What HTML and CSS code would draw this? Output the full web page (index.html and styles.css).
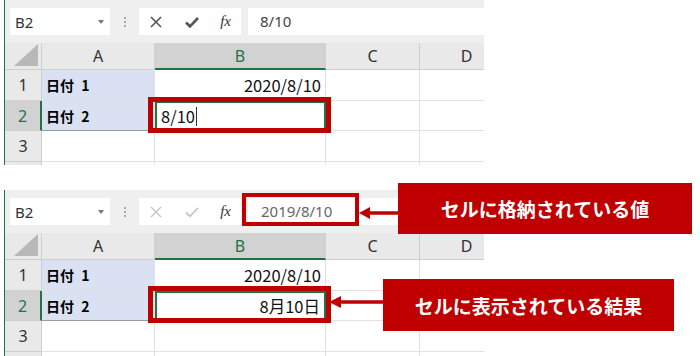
FILE: index.html
```html
<!DOCTYPE html>
<html lang="ja">
<head>
    <meta charset="UTF-8">
    <meta name="viewport" content="width=device-width, initial-scale=1.0">
    <title>セルの値と表示</title>
    <link rel="stylesheet" href="styles.css">
</head>
<body>
    <div class="figure">
        <!-- 入力中のシート -->
        <section class="sheet">
            <div class="toolbar">
                <div class="namebox"><span>B2</span><svg class="caret" width="6" height="4" viewBox="0 0 6 4"><path d="M0 0h6L3 4z" fill="#777"/></svg></div>
                <div class="grip"><i></i><i></i><i></i></div>
                <div class="fx-icons">
                    <svg width="14" height="14" viewBox="0 0 14 14"><path d="M2 2l10 10M12 2L2 12" stroke="#555" stroke-width="1.6"/></svg>
                    <svg width="16" height="14" viewBox="0 0 16 14"><path d="M2 7.5l4 3.8L14 3" stroke="#555" stroke-width="2.6" fill="none"/></svg>
                    <span class="fx">fx</span>
                </div>
                <div class="formula">8/10</div>
            </div>
            <div class="grid">
                <div class="corner"><svg width="24" height="22" viewBox="0 0 24 22"><path d="M24 0v22H0z" fill="#b8b8b8"/></svg></div>
                <div class="colhead">A</div>
                <div class="colhead sel">B</div>
                <div class="colhead">C</div>
                <div class="colhead">D</div>

                <div class="rowhead">1</div>
                <div class="cell label">日付 1</div>
                <div class="cell num">2020/8/10</div>
                <div class="cell"></div>
                <div class="cell"></div>

                <div class="rowhead sel">2</div>
                <div class="cell label sel">日付 2</div>
                <div class="cell active">8/10<span class="cursor"></span></div>
                <div class="cell"></div>
                <div class="cell"></div>

                <div class="rowhead">3</div>
                <div class="cell"></div>
                <div class="cell"></div>
                <div class="cell"></div>
                <div class="cell"></div>

                <div class="rowhead"></div>
                <div class="cell"></div>
                <div class="cell"></div>
                <div class="cell"></div>
                <div class="cell"></div>
            </div>
            <div class="mark mark-cell"></div>
        </section>

        <!-- 確定後のシート -->
        <section class="sheet">
            <div class="toolbar">
                <div class="namebox"><span>B2</span><svg class="caret" width="6" height="4" viewBox="0 0 6 4"><path d="M0 0h6L3 4z" fill="#777"/></svg></div>
                <div class="grip"><i></i><i></i><i></i></div>
                <div class="fx-icons">
                    <svg width="14" height="14" viewBox="0 0 14 14"><path d="M2 2l10 10M12 2L2 12" stroke="#c4c4c4" stroke-width="1.4"/></svg>
                    <svg width="16" height="14" viewBox="0 0 16 14"><path d="M2 7.5l4 3.8L14 3" stroke="#c4c4c4" stroke-width="1.8" fill="none"/></svg>
                    <span class="fx">fx</span>
                </div>
                <div class="formula muted">2019/8/10</div>
            </div>
            <div class="grid">
                <div class="corner"><svg width="24" height="22" viewBox="0 0 24 22"><path d="M24 0v22H0z" fill="#b8b8b8"/></svg></div>
                <div class="colhead">A</div>
                <div class="colhead sel">B</div>
                <div class="colhead">C</div>
                <div class="colhead">D</div>

                <div class="rowhead">1</div>
                <div class="cell label">日付 1</div>
                <div class="cell num">2020/8/10</div>
                <div class="cell"></div>
                <div class="cell"></div>

                <div class="rowhead sel">2</div>
                <div class="cell label sel">日付 2</div>
                <div class="cell num active">8月10日</div>
                <div class="cell"></div>
                <div class="cell"></div>

                <div class="rowhead">3</div>
                <div class="cell"></div>
                <div class="cell"></div>
                <div class="cell"></div>
                <div class="cell"></div>

                <div class="rowhead"></div>
                <div class="cell"></div>
                <div class="cell"></div>
                <div class="cell"></div>
                <div class="cell"></div>
            </div>
            <div class="mark mark-formula"></div>
            <div class="mark mark-cell2"></div>
        </section>

        <!-- 注釈 -->
        <svg class="arrow arrow-1" width="40" height="14" viewBox="0 0 40 14"><path d="M0 7L11 1v4.2h29v3.6H11V13z" fill="#c00000"/></svg>
        <div class="callout callout-1">セルに格納されている値</div>
        <svg class="arrow arrow-2" width="55" height="12" viewBox="0 0 55 12"><path d="M0 6L12 0v4.3h43v3.4H12V12z" fill="#c00000"/></svg>
        <div class="callout callout-2">セルに表示されている結果</div>
    </div>
</body>
</html>
```

FILE: styles.css
```css
/* 全体 */
body {
    margin: 0;
    background: #fff;
    font-family: "Noto Sans CJK JP", "Noto Sans", sans-serif;
}
.figure {
    position: relative;
    width: 700px;
    height: 356px;
    overflow: hidden;
}

/* シート */
.sheet {
    position: relative;
    width: 480px;
    height: 165px;
    margin-left: 4px;
    border-left: 1px solid #217346;
    overflow: hidden;
    box-sizing: border-box;
}
.sheet + .sheet {
    margin-top: 25px;
    height: 166px;
}

/* 数式バー */
.toolbar {
    display: flex;
    align-items: center;
    height: 43px;
    padding: 0 0 0 5px;
    background: #efefef;
    box-sizing: border-box;
}
.namebox {
    display: flex;
    align-items: center;
    justify-content: space-between;
    width: 100px;
    height: 27px;
    padding: 0 6px 0 5px;
    background: #fff;
    box-sizing: border-box;
    font-family: "Noto Sans", sans-serif;
    font-size: 15px;
    color: #333;
}
.grip {
    display: flex;
    flex-direction: column;
    gap: 2px;
    width: 29px;
    align-items: center;
}
.grip i {
    width: 2px;
    height: 2px;
    background: #aaa;
}
.fx-icons {
    display: flex;
    align-items: center;
    justify-content: space-between;
    width: 102px;
    height: 27px;
    padding: 0 10px 0 10px;
    background: #fff;
    box-sizing: border-box;
}
.fx {
    font-family: "Liberation Serif", serif;
    font-style: italic;
    font-size: 15px;
    color: #333;
}
.formula {
    flex: 1;
    height: 27px;
    margin-left: 7px;
    padding-left: 12px;
    background: #fff;
    font-family: "Noto Sans", sans-serif;
    font-size: 15px;
    line-height: 27px;
    color: #444;
}
.formula.muted {
    color: #666;
    padding-left: 13px;
}

/* グリッド */
.grid {
    display: grid;
    grid-template-columns: 37px 113px 171px 94px 94px;
    grid-template-rows: 27px 31px 30px 31px 31px;
}
.grid > div {
    box-sizing: border-box;
    border-right: 1px solid #e1e1e1;
    border-bottom: 1px solid #e1e1e1;
}
.corner {
    display: flex;
    align-items: flex-end;
    justify-content: flex-end;
    padding: 0 3px 3px 0;
    background: #e9e9e9;
}
.grid > .corner,
.grid > .colhead,
.grid > .rowhead {
    border-color: #cfcfcf;
}
.colhead,
.rowhead {
    display: flex;
    align-items: center;
    justify-content: center;
    background: #e9e9e9;
    font-family: "Noto Sans", sans-serif;
    font-size: 16px;
    color: #333;
}
.grid > .colhead.sel {
    background: #d2d2d2;
    color: #217346;
    border-bottom: 2px solid #217346;
}
.grid > .rowhead.sel {
    background: #d2d2d2;
    color: #217346;
    border-right: 2px solid #217346;
}
.cell {
    display: flex;
    align-items: center;
    padding: 0 4px;
    font-size: 16.5px;
    color: #111;
}
.cell.label {
    background: #d9e1f2;
    font-weight: 700;
    font-size: 14px;
    color: #000;
    word-spacing: 4px;
}
.grid > .cell.label.sel {
    border-bottom-color: #9a9a9a;
}
.cell.num {
    justify-content: flex-end;
}
.grid > .cell.active {
    border: 2px solid #217346;
}
.cursor {
    display: inline-block;
    width: 1px;
    height: 19px;
    margin-left: 1px;
    background: #333;
}

/* 赤枠 */
.mark {
    position: absolute;
    border: 5px solid #c00000;
    box-sizing: border-box;
}
.mark-cell {
    left: 143px;
    top: 97px;
    width: 183px;
    height: 36px;
}
.mark-cell2 {
    left: 143px;
    top: 96px;
    width: 183px;
    height: 37px;
}
.mark-formula {
    left: 237px;
    top: 3px;
    width: 117px;
    height: 33px;
    border-width: 4px;
}

/* 吹き出し */
.arrow {
    position: absolute;
}
.arrow-1 {
    left: 359px;
    top: 206px;
}
.arrow-2 {
    left: 329px;
    top: 296px;
}
.callout {
    position: absolute;
    display: flex;
    align-items: center;
    justify-content: center;
    background: #c00000;
    color: #fff;
    font-weight: 700;
    font-size: 19px;
}
.callout-1 {
    left: 398px;
    top: 183px;
    width: 294px;
    height: 51px;
}
.callout-2 {
    left: 383px;
    top: 279px;
    width: 291px;
    height: 52px;
}
```
